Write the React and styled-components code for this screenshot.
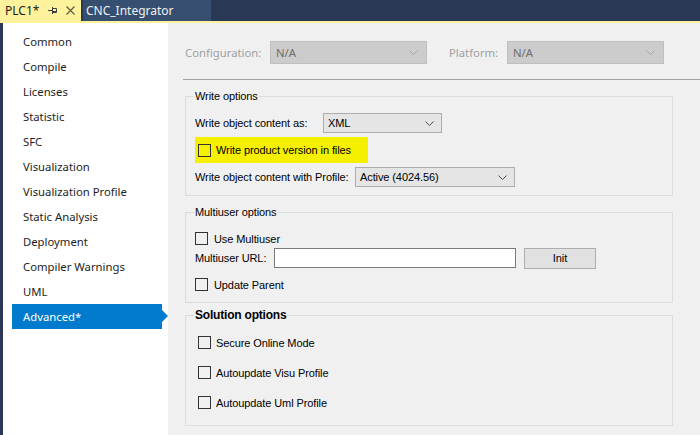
import React from "react";
import styled, { createGlobalStyle } from "styled-components";

const GlobalStyle = createGlobalStyle`
  html, body {
    margin: 0;
    padding: 0;
    background: #f0f0f0;
  }
`;

const navItems = [
  "Common",
  "Compile",
  "Licenses",
  "Statistic",
  "SFC",
  "Visualization",
  "Visualization Profile",
  "Static Analysis",
  "Deployment",
  "Compiler Warnings",
  "UML",
  "Advanced*",
];

const uiFont = '"Segoe UI", "Noto Sans", sans-serif';

const Window = styled.div`
  width: 700px;
  height: 435px;
  display: flex;
  flex-direction: column;
  overflow: hidden;
  background: #293955;
  font-family: ${uiFont};
`;

const TabBar = styled.div`
  height: 21px;
  display: flex;
  align-items: stretch;
  background: #293955;
`;

const Tab = styled.div`
  display: flex;
  align-items: center;
  width: ${(p) => p.$width}px;
  margin-right: 2px;
  padding-left: ${(p) => (p.$active ? 5 : 3)}px;
  box-sizing: border-box;
  font-size: 12px;
  color: ${(p) => (p.$active ? "#1e1e1e" : "#f1f1f1")};
  background: ${(p) => (p.$active ? "#fff29d" : "#364e6f")};
`;

const TabIcon = styled.span`
  display: flex;
  margin-left: ${(p) => p.$ml}px;
`;

const TabUnderline = styled.div`
  height: 2px;
  background: #fff29d;
`;

const Body = styled.div`
  flex: 1;
  display: flex;
  margin-left: 3px;
`;

const Sidebar = styled.nav`
  width: 165px;
  padding-top: 6px;
  background: #ffffff;
`;

const NavItem = styled.div`
  position: relative;
  height: 25px;
  width: 150px;
  margin-left: 9px;
  padding-left: 11px;
  box-sizing: border-box;
  display: flex;
  align-items: center;
  font-size: 11.3px;
  color: ${(p) => (p.$selected ? "#ffffff" : "#1e1e1e")};
  background: ${(p) => (p.$selected ? "#007acc" : "transparent")};

  &::after {
    content: "";
    display: ${(p) => (p.$selected ? "block" : "none")};
    position: absolute;
    right: -6px;
    top: 6px;
    border-top: 6px solid transparent;
    border-bottom: 6px solid transparent;
    border-left: 6px solid #007acc;
  }
`;

const Main = styled.main`
  flex: 1;
  padding: 18px 0 0 15px;
  background: #f0f0f0;
  font-family: "Liberation Sans", Arial, sans-serif;
  font-size: 11px;
  letter-spacing: -0.1px;
  color: #000;
`;

const ConfigRow = styled.div`
  display: flex;
  align-items: center;
  height: 23px;
  margin-left: 2px;
  letter-spacing: 0;
`;

const DisabledLabel = styled.span`
  font-family: ${uiFont};
  font-size: 11.3px;
  color: #a0a0a0;
  width: ${(p) => p.$width}px;
`;

const DisabledCombo = styled.div`
  width: 157px;
  height: 23px;
  box-sizing: border-box;
  display: flex;
  align-items: center;
  justify-content: space-between;
  padding: 0 8px 0 5px;
  border: 1px solid #bfbfbf;
  background: #cccccc;
  color: #6d6d6d;
  font-family: ${uiFont};
  font-size: 11.3px;
  margin-right: ${(p) => p.$mr || 0}px;
`;

const Separator = styled.div`
  height: 1px;
  margin-top: 15px;
  background: #a0a0a0;
`;

const Group = styled.section`
  position: relative;
  width: 488px;
  box-sizing: border-box;
  margin: ${(p) => p.$mt}px 0 0 2px;
  padding: ${(p) => p.$pt}px 0 ${(p) => p.$pb}px ${(p) => p.$pl}px;
  border: 1px solid #dcdcdc;
  display: flex;
  flex-direction: column;
  gap: ${(p) => p.$gap || 0}px;
  align-items: flex-start;
`;

const Legend = styled.span`
  position: absolute;
  top: -7px;
  left: 8px;
  padding: 0 1px;
  background: #f0f0f0;
  line-height: 13px;
  font-size: ${(p) => (p.$bold ? 12 : 11)}px;
  font-weight: ${(p) => (p.$bold ? 700 : 400)};
  letter-spacing: ${(p) => (p.$bold ? "-0.2px" : "-0.1px")};
`;

const FieldRow = styled.div`
  display: flex;
  align-items: center;
  height: 20px;
  margin-top: ${(p) => p.$mt || 0}px;
`;

const FieldLabel = styled.span`
  width: ${(p) => p.$width}px;
`;

const Combo = styled.div`
  width: ${(p) => p.$width}px;
  height: 20px;
  box-sizing: border-box;
  display: flex;
  align-items: center;
  justify-content: space-between;
  padding: 0 7px 0 4px;
  border: 1px solid #adadad;
  background: #e5e5e5;
  font-size: 11px;
`;

const Highlight = styled.div`
  width: 173px;
  height: 26px;
  margin-top: 4px;
  padding-left: 3px;
  box-sizing: border-box;
  display: flex;
  align-items: center;
  background: #f5f000;
`;

const CheckRow = styled.label`
  display: flex;
  align-items: center;
  gap: ${(p) => p.$gap || 6}px;
  height: 13px;
  margin-top: ${(p) => p.$mt || 0}px;
`;

const Box = styled.span`
  width: 13px;
  height: 13px;
  box-sizing: border-box;
  border: 1px solid #333333;
  background: transparent;
`;

const TextInput = styled.div`
  width: 242px;
  height: 20px;
  box-sizing: border-box;
  border: 1px solid #7a7a7a;
  background: #ffffff;
`;

const Button = styled.div`
  width: 72px;
  height: 21px;
  margin-left: 8px;
  box-sizing: border-box;
  display: flex;
  align-items: center;
  justify-content: center;
  border: 1px solid #adadad;
  background: #e1e1e1;
  font-size: 11px;
`;

const Chevron = ({ color = "#505050" }) => (
  <svg width="9" height="5" viewBox="0 0 9 5">
    <path d="M0.5 0.5 L4.5 4.5 L8.5 0.5" fill="none" stroke={color} strokeWidth="1" />
  </svg>
);

const PinIcon = () => (
  <svg width="10" height="9" viewBox="0 0 10 9">
    <path d="M0 4.5 H4 M4.5 1 V8" stroke="#3f3f3f" strokeWidth="1" fill="none" />
    <path d="M4.5 2.5 H8.5 V6.5 H4.5" stroke="#3f3f3f" strokeWidth="1" fill="none" />
    <path d="M4.5 5.5 H8.5" stroke="#3f3f3f" strokeWidth="1" fill="none" />
  </svg>
);

const CloseIcon = () => (
  <svg width="9" height="9" viewBox="0 0 9 9">
    <path d="M0.5 0.5 L8.5 8.5 M8.5 0.5 L0.5 8.5" stroke="#5c5c45" strokeWidth="1.2" fill="none" />
  </svg>
);

const Check = ({ children, ...rest }) => (
  <CheckRow {...rest}>
    <Box />
    <span>{children}</span>
  </CheckRow>
);

export default function App() {
  return (
    <>
      <GlobalStyle />
      <Window>
        <TabBar>
          <Tab $active $width={81}>
            PLC1*
            <TabIcon $ml={9}>
              <PinIcon />
            </TabIcon>
            <TabIcon $ml={8}>
              <CloseIcon />
            </TabIcon>
          </Tab>
          <Tab $width={128}>CNC_Integrator</Tab>
        </TabBar>
        <TabUnderline />
        <Body>
          <Sidebar>
            {navItems.map((item) => (
              <NavItem key={item} $selected={item === "Advanced*"}>
                {item}
              </NavItem>
            ))}
          </Sidebar>
          <Main>
            <ConfigRow>
              <DisabledLabel $width={85}>Configuration:</DisabledLabel>
              <DisabledCombo $mr={22}>
                N/A
                <Chevron color="#a8a8a8" />
              </DisabledCombo>
              <DisabledLabel $width={58}>Platform:</DisabledLabel>
              <DisabledCombo>
                N/A
                <Chevron color="#a8a8a8" />
              </DisabledCombo>
            </ConfigRow>
            <Separator />

            <Group $mt={16} $pt={16} $pb={8} $pl={9}>
              <Legend>Write options</Legend>
              <FieldRow>
                <FieldLabel $width={128}>Write object content as:</FieldLabel>
                <Combo $width={119}>
                  XML
                  <Chevron />
                </Combo>
              </FieldRow>
              <Highlight>
                <Check $gap={5}>Write product version in files</Check>
              </Highlight>
              <FieldRow $mt={4}>
                <FieldLabel $width={160}>Write object content with Profile:</FieldLabel>
                <Combo $width={160}>
                  Active (4024.56)
                  <Chevron />
                </Combo>
              </FieldRow>
            </Group>

            <Group $mt={16} $pt={19} $pb={11} $pl={9}>
              <Legend>Multiuser options</Legend>
              <Check>Use Multiuser</Check>
              <FieldRow $mt={3}>
                <FieldLabel $width={79}>Multiuser URL:</FieldLabel>
                <TextInput />
                <Button>Init</Button>
              </FieldRow>
              <Check $mt={10}>Update Parent</Check>
            </Group>

            <Group $mt={12} $pt={20} $pb={16} $pl={12} $gap={17}>
              <Legend $bold>Solution options</Legend>
              <Check $gap={5}>Secure Online Mode</Check>
              <Check $gap={5}>Autoupdate Visu Profile</Check>
              <Check $gap={5}>Autoupdate Uml Profile</Check>
            </Group>
          </Main>
        </Body>
      </Window>
    </>
  );
}
